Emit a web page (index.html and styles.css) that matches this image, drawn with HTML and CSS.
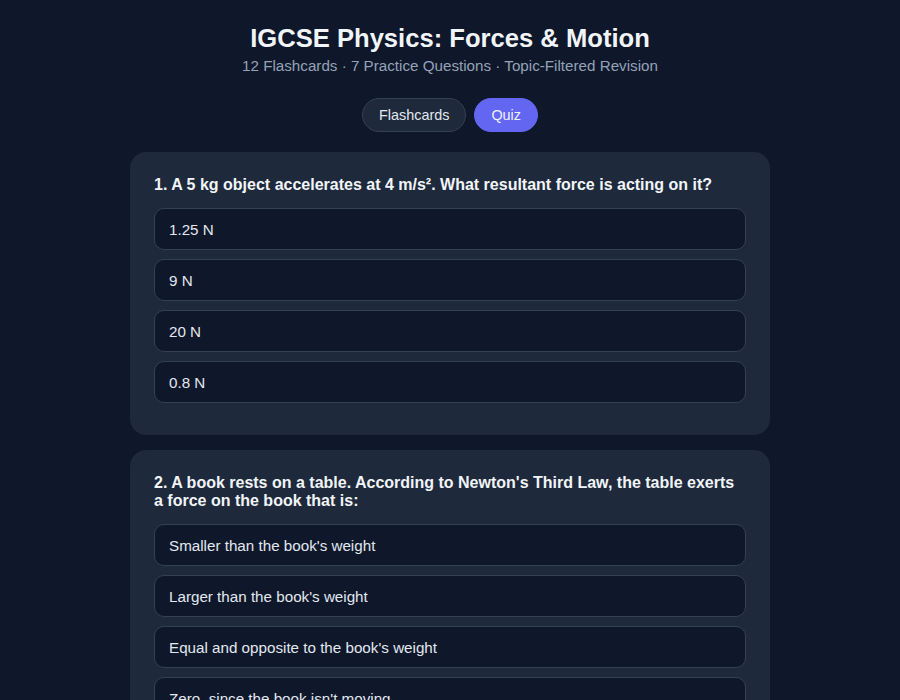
FILE: index.html
```html
<!DOCTYPE html>
<html lang="en">
<head>
<meta charset="utf-8">
<title>IGCSE Physics: Forces &amp; Motion</title>
<link rel="stylesheet" href="styles.css">
</head>
<body>
<div class="app">
  <header class="header">
    <h1 class="title">IGCSE Physics: Forces &amp; Motion</h1>
    <p class="subtitle">12 Flashcards · 7 Practice Questions · Topic-Filtered Revision</p>
  </header>
  <nav class="tabs">
    <button class="tab">Flashcards</button>
    <button class="tab tab-active">Quiz</button>
  </nav>
  <main class="quiz">
    <section class="card">
      <h2 class="question">1. A 5 kg object accelerates at 4 m/s². What resultant force is acting on it?</h2>
      <div class="options">
        <button class="option">1.25 N</button>
        <button class="option">9 N</button>
        <button class="option">20 N</button>
        <button class="option">0.8 N</button>
      </div>
    </section>
    <section class="card">
      <h2 class="question">2. A book rests on a table. According to Newton's Third Law, the table exerts a force on the book that is:</h2>
      <div class="options">
        <button class="option">Smaller than the book's weight</button>
        <button class="option">Larger than the book's weight</button>
        <button class="option">Equal and opposite to the book's weight</button>
        <button class="option">Zero, since the book isn't moving</button>
      </div>
    </section>
  </main>
</div>
</body>
</html>
```

FILE: styles.css
```css
* { box-sizing: border-box; }
html, body {
  margin: 0;
  background: #0f172a;
  color: #e2e8f0;
  font-family: "Liberation Sans", Arial, Helvetica, sans-serif;
}
.app {
  max-width: 640px;
  margin: 0 auto;
  padding: 22px 0 40px;
}
.header { text-align: center; }
.title {
  margin: 0;
  font-size: 25.6px;
  line-height: 32px;
  font-weight: 700;
  color: #f1f5f9;
}
.subtitle {
  margin: 3px 0 0;
  font-size: 15.2px;
  line-height: 18px;
  color: #94a3b8;
}
.tabs {
  display: flex;
  justify-content: center;
  gap: 8px;
  margin-top: 23px;
}
.tab {
  font-family: inherit;
  font-size: 14.4px;
  line-height: 16px;
  padding: 8px 16px;
  border-radius: 999px;
  border: 1px solid #334155;
  background: #1e293b;
  color: #e2e8f0;
  cursor: pointer;
}
.tab-active {
  background: #6366f1;
  border-color: #6366f1;
  color: #eef2ff;
}
.quiz {
  margin-top: 20px;
  display: flex;
  flex-direction: column;
  gap: 15px;
}
.card {
  background: #1e293b;
  border-radius: 16px;
  padding: 24px 24px 32px;
}
.question {
  margin: 0 0 14px;
  font-size: 16px;
  line-height: 18px;
  font-weight: 700;
  color: #f1f5f9;
}
.options {
  display: flex;
  flex-direction: column;
  gap: 9px;
}
.option {
  text-align: left;
  font-family: inherit;
  font-size: 15.2px;
  line-height: 16px;
  padding: 13px 14px 11px;
  background: #0f172a;
  color: #e2e8f0;
  border: 1px solid #334155;
  border-radius: 10px;
  cursor: pointer;
}
```
